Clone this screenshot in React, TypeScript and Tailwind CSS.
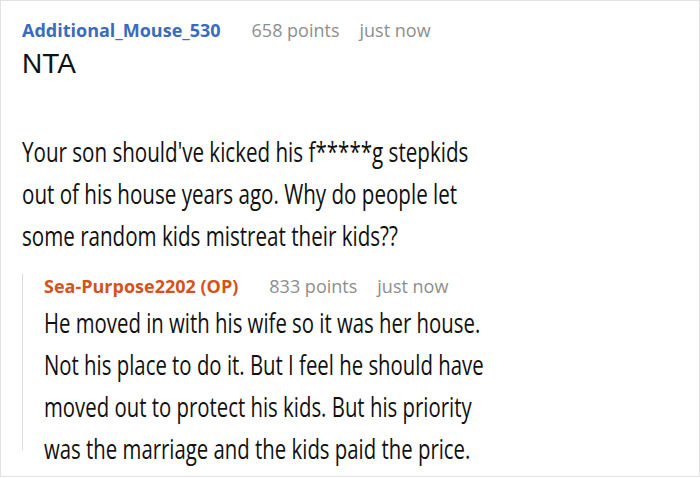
import React from "react";

const base = "font-['Open_Sans',sans-serif] text-[28px] leading-[42px] text-[#111] whitespace-nowrap origin-left";

function Meta({ name, color, points }: { name: string; color: string; points: string }) {
  return (
    <div className="flex items-baseline font-['Open_Sans',sans-serif] text-[18px] leading-[24px] whitespace-nowrap">
      <span className={`font-bold ${color}`}>{name}</span>
      <span className="ml-[31px] text-[#8e8e8e]">{points}</span>
      <span className="ml-[20px] text-[#8e8e8e]">just now</span>
    </div>
  );
}

export default function App() {
  const l1 = [
    "Your son should've kicked his f*****g stepkids",
    "out of his house years ago. Why do people let",
    "some random kids mistreat their kids??",
  ];
  const l2 = [
    "He moved in with his wife so it was her house.",
    "Not his place to do it. But I feel he should have",
    "moved out to protect his kids. But his priority",
    "was the marriage and the kids paid the price.",
  ];
  return (
    <div className="w-[700px] h-[477px] border border-[#e2e2e2] bg-white pl-[21px] pt-[17px] overflow-hidden">
      <Meta name="Additional_Mouse_530" color="text-[#3a6bbd]" points="658 points" />
      <p className="mt-[1px] font-['Liberation_Sans',Arial,sans-serif] text-[28px] leading-[42px] text-[#111]">NTA</p>
      <div className="mt-[45px]">
        {l1.map((t) => (
          <div key={t} className={`${base} scale-x-[0.735]`}>{t}</div>
        ))}
      </div>
      <div className="mt-[27px] h-[176px] border-l border-[#dcdcdc] pl-[21px]">
        <div className="-mt-[9px]">
          <Meta name="Sea-Purpose2202 (OP)" color="text-[#d4521c]" points="833 points" />
        </div>
        <div className="mt-[3px]">
          {l2.map((t) => (
            <div key={t} className={`${base} scale-x-[0.727]`}>{t}</div>
          ))}
        </div>
      </div>
    </div>
  );
}
